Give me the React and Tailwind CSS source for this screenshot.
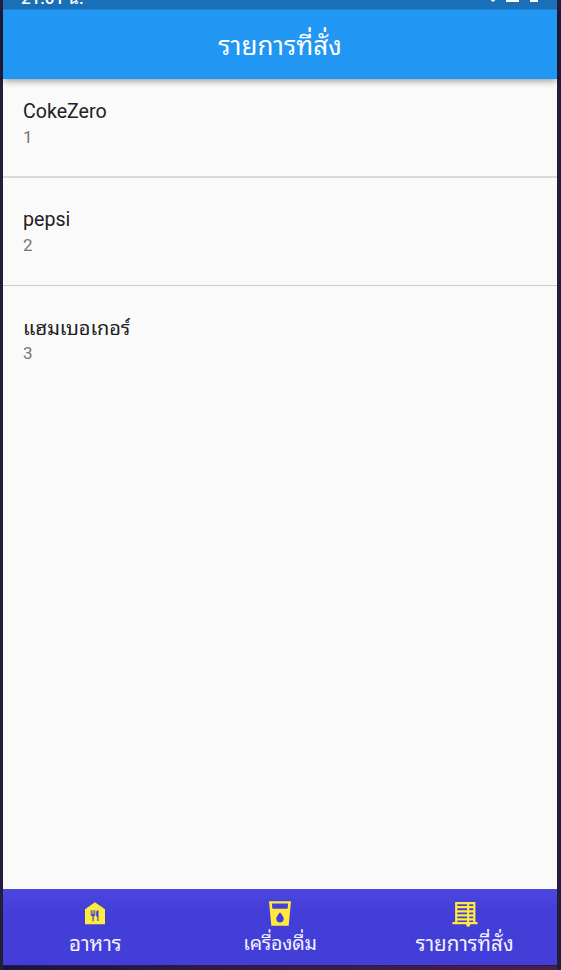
const font = "font-['Roboto','Noto_Sans_Thai_Looped','Droid_Sans_Thai','Noto_Looped_Thai','Waree','Loma','Noto_Sans_Thai','Noto_Sans',sans-serif]";

const orders = [
  { name: 'CokeZero', count: 1, row: 'h-[97px] pt-[20px]', title: 'text-[19.6px]' },
  { name: 'pepsi', count: 2, row: 'h-[109px] border-t-2 border-[#d9d9d9] pt-[29px]', title: 'text-[19.6px]' },
  { name: 'แฮมเบอเกอร์', count: 3, row: 'border-t border-[#cbcbcb] pt-[29px]', title: 'text-[20px] tracking-[-0.1px]' },
];

function FoodIcon() {
  return (
    <svg className="h-[26px] w-[26px] fill-[#ffeb3b]" viewBox="0 0 26 26">
      <path d="M3 8.2 13 1.2l10 7v15H3z" />
      <path
        className="fill-[#443ed8]"
        d="M8.7 9.2h1v4h.8v-4h1v4h.8v-4h1v4.2c0 1-.6 1.6-1.6 1.8v5h-1.2v-5c-1-.2-1.8-.8-1.8-1.8zM14.2 11.5c0-1.4.9-2.3 2.3-2.3V20h-1.2v-4.4h-1.1z"
      />
    </svg>
  );
}

function DrinkIcon() {
  return (
    <svg className="h-[26px] w-[26px] fill-[#ffeb3b]" viewBox="0 0 26 26">
      <path
        fillRule="evenodd"
        d="M2 .2h22l-2.3 24.6H4.3zM4.9 2.5l.5 5.3h15.2l.5-5.3zM13 11.2s-3.8 4.3-3.8 6.6c0 2.1 1.7 3.7 3.8 3.7s3.8-1.6 3.8-3.7c0-2.3-3.8-6.6-3.8-6.6z"
      />
    </svg>
  );
}

function BlindsIcon() {
  return (
    <svg className="h-[26px] w-[26px] fill-none stroke-[#ffeb3b]" viewBox="0 0 26 26">
      <path
        strokeWidth="2.2"
        d="M4.2 1v20.5M22.3 1v20.5M3.2 2.1h20.2M3.2 6.2h20M3.2 10.3h20M3.2 14.3h20M3.2 18.3h20M.5 22.1h25M16.2 2v21"
      />
      <circle className="fill-[#ffeb3b] stroke-none" cx="16.2" cy="23.8" r="2" />
    </svg>
  );
}

const tabs = [
  { label: 'อาหาร', Icon: FoodIcon, text: 'text-[20.6px]' },
  { label: 'เครื่องดื่ม', Icon: DrinkIcon, text: 'text-[19.6px] tracking-[-0.2px]' },
  { label: 'รายการที่สั่ง', Icon: BlindsIcon, text: 'text-[20.6px]' },
];

export default function App() {
  return (
    <div className={`flex h-[970px] w-[561px] flex-col overflow-hidden bg-[#211d3b] pr-1 pl-[3px] ${font}`}>
      <div className="z-20 flex h-[9px] shrink-0 items-end justify-between overflow-hidden bg-[#1a70b8] pr-[18px] pl-[18px] text-[17px] font-medium text-white">
        <span className="pb-[2px] leading-[18px]">21:01 น.</span>
        <svg className="h-[9px] w-[50px] fill-white" viewBox="0 0 50 9">
          <path d="M1.5 0h5L4 2zM17 0h13v2H17zM41 0h8v2h-8z" />
        </svg>
      </div>
      <header className="z-10 flex h-[69.5px] shrink-0 items-center justify-center border-t border-[#1e85d7] bg-[#2196f3] text-[26px] leading-none text-white shadow-[0_2px_7px_rgba(0,0,0,0.4)]">
        <h1 className="pt-1">รายการที่สั่ง</h1>
      </header>
      <main className="flex-1 bg-[#fafafa]">
        {orders.map((order) => (
          <div key={order.name} className={`pl-5 ${order.row}`}>
            <div className={`leading-[26px] text-[#212121] ${order.title}`}>{order.name}</div>
            <div className="text-[17px] leading-[25px] text-[#757575]">{order.count}</div>
          </div>
        ))}
      </main>
      <nav className="grid h-[76px] shrink-0 grid-cols-3 bg-linear-to-b from-[#4b46df] to-[#443ed8] to-30%">
        {tabs.map(({ label, Icon, text }) => (
          <div key={label} className="flex flex-col items-center pt-3 text-[#f3f2ff]">
            <Icon />
            <span className={`mt-[3px] leading-[28px] whitespace-nowrap ${text}`}>{label}</span>
          </div>
        ))}
      </nav>
      <div className="h-[5px] shrink-0 border-t border-[#252044] bg-linear-to-r from-[#17153e] via-[#391b42] to-[#48204a]" />
    </div>
  );
}
